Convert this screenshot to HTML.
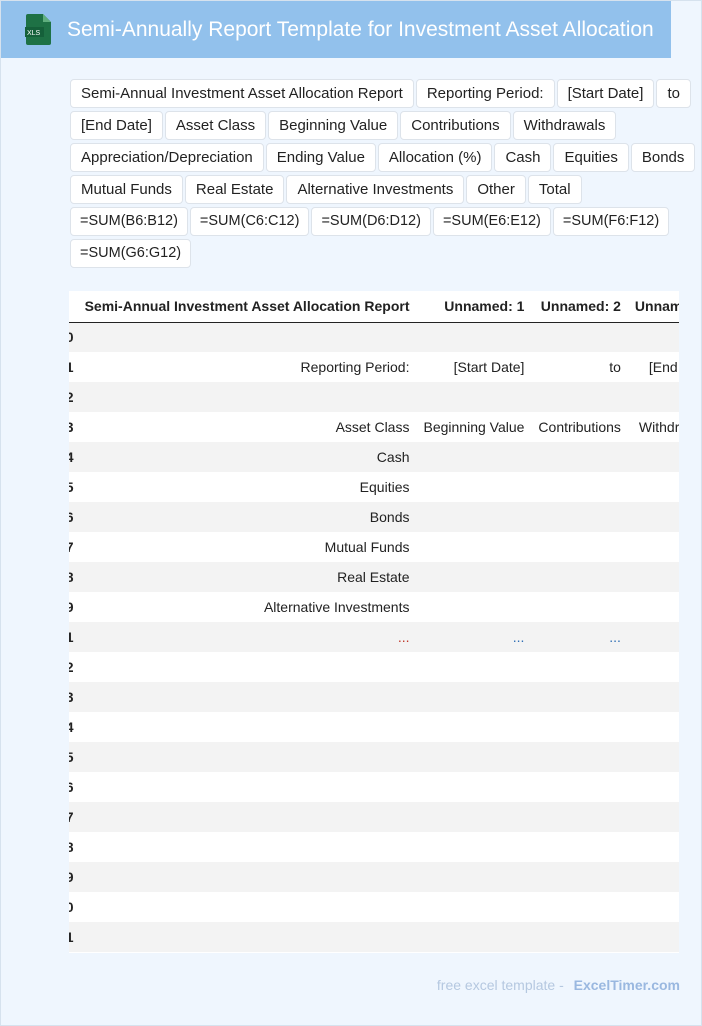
<!DOCTYPE html>
<html><head><meta charset="utf-8"><style>
*{box-sizing:border-box;margin:0;padding:0}
body{width:702px;height:1026px;background:#eff6fe;font-family:"Liberation Sans",Arial,sans-serif;position:relative;overflow:hidden;border:1px solid #d6e2ee}
.hdr{position:absolute;left:0;top:0;width:670px;height:57px;background:#92c1ec;color:#fff;font-size:21px;line-height:57px;padding-left:66px}
.icon{position:absolute;left:24px;top:13px;width:26px;height:31px}
.tags{position:absolute;left:69px;top:78px;width:640px;white-space:nowrap}
.tag{display:inline-block;height:29px;line-height:27px;border:1px solid #dde3ea;border-radius:4px;background:#fff;font-size:15px;color:#222;padding:0 10px;margin:0 2px 3px 0;vertical-align:top}
.s{padding:0 9px;font-size:14.5px}
.tw{position:absolute;left:68px;top:290px;width:610px;height:662px;overflow:hidden;background:#fff}
table{border-collapse:collapse;position:absolute;left:-15px;top:0;font-size:14px;color:#222}
td,th{height:30px;padding:0 7px;text-align:right;white-space:nowrap}
th{font-weight:bold;border-bottom:1.5px solid #222;height:31px}
tr:nth-child(even) td{background:#f3f3f3}
td:first-child,th:first-child{font-weight:bold;width:22px;padding:0 4px}
.c1{width:357px}.c2{width:114px}.c3{width:97px}.c4{width:120px;text-align:left}
td.c4{padding-left:11px}
.r{color:#c0392b}.b{color:#2f6fb5}
.foot{position:absolute;right:21px;top:976px;font-size:14px;color:#b5c8e0}
.foot b{color:#9ab8e0;margin-left:6px}
</style></head><body>
<div class="hdr"><svg class="icon" viewBox="0 0 26 31"><path d="M3 0h15l8 8v21a2 2 0 0 1-2 2H3a2 2 0 0 1-2-2V2a2 2 0 0 1 2-2z" fill="#1e7145"/><path d="M18 0v8h8z" fill="#5fae7e"/><rect x="0" y="13" width="19" height="10" fill="#15603a"/><text x="2" y="21" font-size="7" fill="#fff" font-family="Liberation Sans">XLS</text></svg>Semi-Annually Report Template for Investment Asset Allocation</div>
<div class="tags">
<span class="tag">Semi-Annual Investment Asset Allocation Report</span><span class="tag">Reporting Period:</span><span class="tag">[Start Date]</span><span class="tag">to</span><br>
<span class="tag">[End Date]</span><span class="tag">Asset Class</span><span class="tag">Beginning Value</span><span class="tag">Contributions</span><span class="tag">Withdrawals</span><br>
<span class="tag">Appreciation/Depreciation</span><span class="tag">Ending Value</span><span class="tag">Allocation (%)</span><span class="tag">Cash</span><span class="tag">Equities</span><span class="tag">Bonds</span><br>
<span class="tag">Mutual Funds</span><span class="tag">Real Estate</span><span class="tag">Alternative Investments</span><span class="tag">Other</span><span class="tag">Total</span><br>
<span class="tag s">=SUM(B6:B12)</span><span class="tag s">=SUM(C6:C12)</span><span class="tag s">=SUM(D6:D12)</span><span class="tag s">=SUM(E6:E12)</span><span class="tag s">=SUM(F6:F12)</span><br>
<span class="tag s">=SUM(G6:G12)</span>
</div>
<div class="tw"><table>
<tr><th></th><th class="c1">Semi-Annual Investment Asset Allocation Report</th><th class="c2">Unnamed: 1</th><th class="c3">Unnamed: 2</th><th class="c4">Unnamed: 3</th></tr>
<tr><td>0</td><td></td><td></td><td></td><td class="c4"></td></tr>
<tr><td>1</td><td>Reporting Period:</td><td>[Start Date]</td><td>to</td><td class="c4" style="padding-left:21px">[End Date]</td></tr>
<tr><td>2</td><td></td><td></td><td></td><td class="c4"></td></tr>
<tr><td>3</td><td>Asset Class</td><td>Beginning Value</td><td>Contributions</td><td class="c4">Withdrawals</td></tr>
<tr><td>4</td><td>Cash</td><td></td><td></td><td class="c4"></td></tr>
<tr><td>5</td><td>Equities</td><td></td><td></td><td class="c4"></td></tr>
<tr><td>6</td><td>Bonds</td><td></td><td></td><td class="c4"></td></tr>
<tr><td>7</td><td>Mutual Funds</td><td></td><td></td><td class="c4"></td></tr>
<tr><td>8</td><td>Real Estate</td><td></td><td></td><td class="c4"></td></tr>
<tr><td>9</td><td>Alternative Investments</td><td></td><td></td><td class="c4"></td></tr>
<tr><td>11</td><td class="r">...</td><td class="b">...</td><td class="b">...</td><td class="c4"></td></tr>
<tr><td>12</td><td></td><td></td><td></td><td class="c4"></td></tr>
<tr><td>13</td><td></td><td></td><td></td><td class="c4"></td></tr>
<tr><td>14</td><td></td><td></td><td></td><td class="c4"></td></tr>
<tr><td>15</td><td></td><td></td><td></td><td class="c4"></td></tr>
<tr><td>16</td><td></td><td></td><td></td><td class="c4"></td></tr>
<tr><td>17</td><td></td><td></td><td></td><td class="c4"></td></tr>
<tr><td>18</td><td></td><td></td><td></td><td class="c4"></td></tr>
<tr><td>19</td><td></td><td></td><td></td><td class="c4"></td></tr>
<tr><td>20</td><td></td><td></td><td></td><td class="c4"></td></tr>
<tr><td>21</td><td></td><td></td><td></td><td class="c4"></td></tr>
</table></div>
<div class="foot">free excel template - <b>ExcelTimer.com</b></div>
</body></html>
